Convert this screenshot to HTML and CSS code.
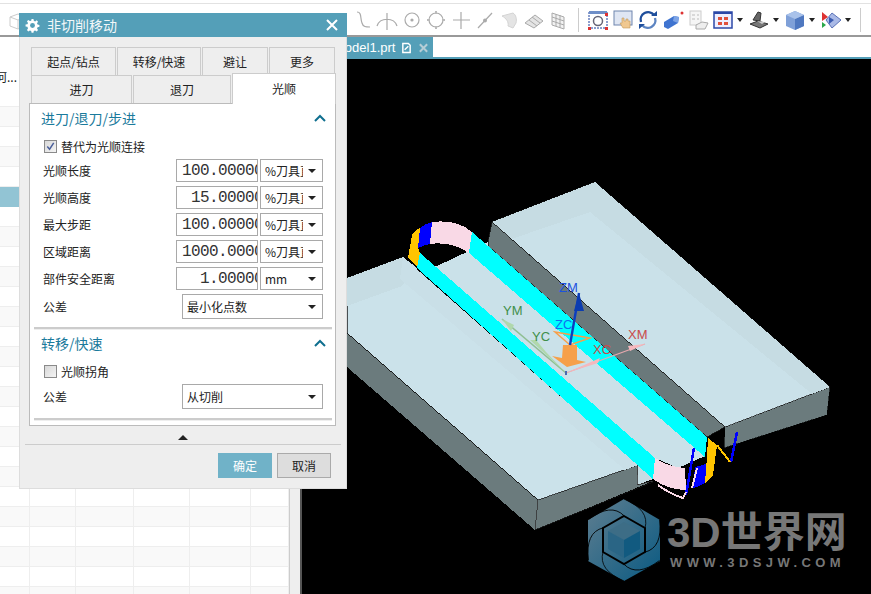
FILE: index.html
```html
<!DOCTYPE html>
<html lang="zh">
<head>
<meta charset="utf-8">
<title>非切削移动</title>
<link rel="stylesheet" href="styles.css">
</head>
<body>
<header class="toolbar">
  <svg class="ic" viewBox="0 0 24 24"><path d="M3 9l8-3 8 3v9l-8 3-8-3zM3 9l8 3 8-3M11 12v9" fill="none" stroke="#ccc"/></svg>
  <div class="tools tools-grey">
    <svg class="ic" viewBox="0 0 24 24"><path d="M6 4c5 0 3 6 5 11 1 4 4 4 8 4" fill="none" stroke="#aaa" stroke-width="1.200"/></svg>
    <svg class="ic" viewBox="0 0 24 24"><path d="M2 18C5 9 19 9 22 18M12 5v17" fill="none" stroke="#aaa" stroke-width="1.200"/></svg>
    <svg class="ic" viewBox="0 0 24 24"><circle cx="12" cy="12" r="7" fill="none" stroke="#aaa" stroke-width="1.200"/><circle cx="12" cy="12" r="1.600" fill="#aaa"/></svg>
    <svg class="ic" viewBox="0 0 24 24"><circle cx="12" cy="12" r="7" fill="none" stroke="#aaa" stroke-width="1.200"/><path d="M12 3v3M12 18v3M3 12h3M18 12h3" stroke="#bbb" stroke-width="2"/></svg>
    <svg class="ic" viewBox="0 0 24 24"><path d="M12 4v17M4 12h17" stroke="#aaa" stroke-width="1.200"/></svg>
    <svg class="ic" viewBox="0 0 24 24"><path d="M5 20L19 5" stroke="#aaa" stroke-width="1.200"/><circle cx="12" cy="12.500" r="2" fill="#aaa"/></svg>
    <svg class="ic" viewBox="0 0 24 24"><path d="M5 8l11-3c3 2 4 6 3 10l-3 5-5-2c1-4-2-8-6-10z" fill="#e4e4e4" stroke="#d4d4d4"/></svg>
    <svg class="ic" viewBox="0 0 24 24"><path d="M3 15l10-8 8 6-9 7z" fill="#e4e4e4" stroke="#aaa"/><path d="M7 12l8 6M10 9l8 6" stroke="#aaa"/></svg>
    <svg class="ic" viewBox="0 0 24 24"><path d="M6 5l12 4v12L6 17zM6 9l12 4M6 13l12 4M10 6v12M14 7v13" fill="#f2f2f2" stroke="#aaa"/></svg>
  </div>
  <span class="tool-sep"></span>
  <div class="tools tools-color">
    <svg class="ic" viewBox="0 0 24 24"><rect x="3" y="4" width="18" height="16" fill="#fff" stroke="#1b3f9e" stroke-dasharray="2 1"/><rect x="3" y="3" width="18" height="3" fill="#6f8fc8"/><circle cx="12" cy="13" r="4.500" fill="none" stroke="#667" stroke-width="1.500"/><rect x="2" y="19" width="3" height="3" fill="#d33"/><rect x="19" y="5" width="3" height="3" fill="#d33"/><rect x="19" y="19" width="3" height="3" fill="#d33"/></svg>
    <svg class="ic" viewBox="0 0 24 24"><rect x="3" y="3" width="18" height="14" fill="#dfe6f3" stroke="#6f85ae"/><path d="M11 10h2v3h2v-2h2v2h2v7h-7l-3-5h2z" fill="#f0c890" stroke="#c29a5c" stroke-width=".6"/></svg>
    <svg class="ic" viewBox="0 0 24 24"><path d="M5 14A7.500 7.500 0 0 1 18 7" fill="none" stroke="#1f4f9c" stroke-width="2.400"/><path d="M19 10A7.500 7.500 0 0 1 6 17" fill="none" stroke="#5d85c2" stroke-width="2.400"/><path d="M15 8h6V3zM9 16H3v5z" fill="#1f4f9c"/></svg>
    <svg class="ic" viewBox="0 0 24 24"><path d="M3 14l10-6 5 1-1 6-10 6-4-2z" fill="#3f74d0"/><path d="M13 8l5 1-1 6-5-2z" fill="#7da4e6"/><circle cx="21" cy="5" r="1.500" fill="#d33"/></svg>
    <svg class="ic" viewBox="0 0 24 24"><rect x="4" y="3" width="11" height="14" fill="#f5f5f5" stroke="#ccc"/><path d="M6 7h3M6 11h3M11 7h2M11 11h2" stroke="#bbb"/><path d="M10 17l6-3 6 1-3 6H10z" fill="#eee" stroke="#aaa"/></svg>
    <span class="tool-menu">
      <svg class="ic" viewBox="0 0 24 24"><rect x="3" y="4" width="18" height="16" fill="#eef" stroke="#2c48a8" stroke-width="1.500"/><path d="M3 5h18" stroke="#2c48a8" stroke-width="2"/><path d="M7 9h4v3H7zM13 9h4v3h-4zM7 14h4v3H7zM13 14h4v3h-4z" fill="#e0503c"/></svg>
      <span class="caret-sm"></span>
    </span>
    <span class="tool-menu">
      <svg class="ic" viewBox="0 0 24 24"><path d="M3 16l8-3 10 3-8 4z" fill="#777" stroke="#333"/><path d="M6 12l5-8 3 1-1 8z" fill="#666" stroke="#333"/><path d="M10 13l8 1-3 2z" fill="#ccc"/></svg>
      <span class="caret-sm"></span>
    </span>
    <span class="tool-menu">
      <svg class="ic" viewBox="0 0 24 24"><path d="M12 3l9 4v11l-9 4-9-4V7z" fill="#7fa0d8"/><path d="M12 11l9-4v11l-9 4z" fill="#4f78c0"/><path d="M12 3l9 4-9 4-9-4z" fill="#a9c2ea"/></svg>
      <span class="caret-sm"></span>
    </span>
    <span class="tool-menu">
      <svg class="ic" viewBox="0 0 24 24"><path d="M13 5l9 7-9 8-6-8z" fill="#a9b9e6" stroke="#5a72b8"/><path d="M10 9l5 3-5 4z" fill="#3b5bb0"/><path d="M3 4l6 5-6 4z" fill="#d33"/><path d="M3 14l4 3-4 3z" fill="#2aa84a"/></svg>
      <span class="caret-sm"></span>
    </span>
  </div>
  <span class="tool-sep tool-sep-end"></span>
</header>

<main class="workspace">
  <section class="navigator">
    <div class="nav-head">何...</div>
    <div class="nav-rows">
      <div class="row-line"></div>
      <div class="row-line"></div>
      <div class="row-line"></div>
      <div class="row-line"></div>
      <div class="row-line"></div>
      <div class="row-line row-sel"></div>
      <div class="row-line"></div>
      <div class="row-line"></div>
      <div class="row-line"></div>
      <div class="row-line"></div>
      <div class="row-line"></div>
      <div class="row-line"></div>
      <div class="row-line"></div>
      <div class="row-line"></div>
      <div class="row-line"></div>
      <div class="row-line"></div>
      <div class="row-line"></div>
      <div class="row-line"></div>
      <div class="row-line"></div>
      <div class="row-line"></div>
      <div class="row-line cols"><i></i><i></i><i></i><i></i><i></i><i></i></div>
      <div class="row-line cols"><i></i><i></i><i></i><i></i><i></i><i></i></div>
      <div class="row-line cols"><i></i><i></i><i></i><i></i><i></i><i></i></div>
      <div class="row-line cols"><i></i><i></i><i></i><i></i><i></i><i></i></div>
      <div class="row-line cols"><i></i><i></i><i></i><i></i><i></i><i></i></div>
      <div class="row-line cols"><i></i><i></i><i></i><i></i><i></i><i></i></div>
    </div>
  </section>
  <section class="viewer">
    <div class="doc-tabs">
      <div class="doc-tab">
        <span class="doc-name">model1.prt</span>
        <svg class="doc-ic" viewBox="0 0 12 12"><path d="M2 1h6l2 2v8H2zM4 8l4-4" fill="none" stroke="#fff" stroke-width="1.600"/></svg>
        <svg class="doc-ic" viewBox="0 0 12 12"><path d="M2 2l8 8M10 2l-8 8" stroke="#b5cdd6" stroke-width="2.200"/></svg>
      </div>
    </div>
    <div class="canvas">
      <svg class="scene" viewBox="302 59 569 535">
        <g shape-rendering="crispEdges">
          <!-- right block -->
          <polygon points="725,427 830,387 827,415 724,448" fill="#6b7b7d" stroke="#000" stroke-width=".6"/>
          <polygon points="492,222 595,182 830,387 725,427" fill="#cae1e9" stroke="#222" stroke-width=".6"/>
          <polygon points="492,222 595,182 830,387 812,394 590,212 500,243" fill="#c6dce3"/>
          <polygon points="492,222 725,427 707,437 488,246 488,242" fill="#6a797b" stroke="#111" stroke-width=".8"/>
          <!-- groove floor -->
          <polygon points="437,266 488,242 488,246 707,437 705,456 678,468 655,458 420,268" fill="#cae1e9"/>
          <polygon points="472,232 707,437 705,457 469,253" fill="#00ffff"/>
          <!-- left block -->
          <polygon points="347,367 347,333 538,500 638,465 637,485 653,481 535,530" fill="#6b7b7d"/>
          <polygon points="347,278 403,257 638,465 538,500 347,333" fill="#cbe2ea" stroke="#111" stroke-width=".7"/>
          <polygon points="347,278 403,257 417,268 402,286 347,306" fill="#c6dce3"/>
          <polygon points="403,257 638,465 625,470 400,279" fill="#c9dfe7"/>
          <polygon points="638,465 653,479 637,485" fill="#c6dce3"/>
          <path d="M538,500L535,530M638,465L637,485L653,481" fill="none" stroke="#333" stroke-width=".8"/>
          <path d="M347,333L538,500M535,530L653,482" fill="none" stroke="#111" stroke-width=".8"/>
          <polygon points="420,253 655,458 653,479 417,268" fill="#00ffff"/>
          <!-- far arc -->
          <path d="M432,222Q457,219 472,232L469,253Q452,241 430,244z" fill="#f9d9e6"/>
          <path d="M420,228Q425,224 432,222L430,244Q424,245 418,248z" fill="#0000ff"/>
          <path d="M412,235Q415,230 420,228L418,248L420,253L417,267L408,258z" fill="#ffc400"/>
          <!-- near arc -->
          <path d="M655,458Q668,467 685,468L686,490Q668,490 653,479z" fill="#f9d9e6"/>
          <path d="M695,467Q702,466 707,463L705,483Q699,487 693,488z" fill="#0000ff"/>
          <path d="M708,438L717,445L713,475L705,483L707,457z" fill="#ffc400"/>
          <path d="M694,448L686,495M737,432L731,462" stroke="#0000ff" stroke-width="2.500" fill="none"/>
          <path d="M717,445L730,462" stroke="#ffc400" stroke-width="2" fill="none"/>
          <path d="M658,485Q670,494 683,498L686,492" stroke="#f9d9e6" stroke-width="2" fill="none"/>
          <path d="M697,468L692,488" stroke="#f9d9e6" stroke-width="2" fill="none"/>
        </g>
        <!-- tool -->
        <path d="M555,332L590,338 570,345z" fill="none" stroke="#f6a04a" stroke-width="1.500"/>
        <polygon points="563,345 577,345 577,360 586,362 567,367 552,356 562,358" fill="#f6a04a"/>
        <!-- triad -->
        <path d="M566,373L502,319" stroke="#8fbf92" stroke-width="1.500"/>
        <path d="M502,319L514,325 511,331z" fill="#b0d8ac"/>
        <path d="M566,373L530,340 536,340 546,352z" fill="#b0d8ac"/>
        <path d="M566,373L645,344" stroke="#e8a8ae" stroke-width="1.200"/>
        <path d="M566,373L600,358 598,363z M645,344L628,346 630,351z" fill="#f5b8bd"/>
        <path d="M579,293L570,345" stroke="#0b3cc0" stroke-width="2.400"/>
        <path d="M579,293L584,311 574,311z" fill="#0b3cb0"/>
        <rect x="565" y="371" width="2" height="4" fill="#4a68b0"/>
        <g class="axis">
          <text class="ax-blue" x="559" y="292">ZM</text>
          <text class="ax-cyan" x="555" y="329">ZC</text>
          <text class="ax-green" x="503" y="315">YM</text>
          <text class="ax-green" x="532" y="341">YC</text>
          <text class="ax-red" x="593" y="354">XC</text>
          <text class="ax-red" x="628" y="339">XM</text>
        </g>
        <!-- watermark logo -->
        <defs>
          <linearGradient id="logo" x1="0" y1="0" x2="1" y2="1">
            <stop offset="0" stop-color="#5f7e90"/>
            <stop offset="1" stop-color="#0a5a82"/>
          </linearGradient>
        </defs>
        <polygon points="624,499 660,520 660,561 624,581 588,561 588,520" fill="url(#logo)"/>
        <g fill="none" stroke="#000" stroke-width=".8">
          <path d="M624,499Q650,510 645,528"/>
          <path d="M624,499Q650,510 645,528" transform="rotate(60 624 540)"/>
          <path d="M624,499Q650,510 645,528" transform="rotate(120 624 540)"/>
          <path d="M624,499Q650,510 645,528" transform="rotate(180 624 540)"/>
          <path d="M624,499Q650,510 645,528" transform="rotate(240 624 540)"/>
          <path d="M624,499Q650,510 645,528" transform="rotate(300 624 540)"/>
        </g>
        <polygon points="624,516 645,528 645,552 624,564 603,552 603,528" fill="none" stroke="#000" stroke-width="2"/>
        <polygon points="624,522 640,531 624,540 608,531" fill="#3d6d86"/>
        <polygon points="608,531 624,540 624,558 608,549" fill="#2a6585"/>
        <polygon points="640,531 640,549 624,558 624,540" fill="#115a80"/>
        <text class="wm-big" x="667" y="547">3D世界网</text>
        <text class="wm-small" x="670" y="567">WWW.3DSJW.COM</text>
      </svg>
    </div>
  </section>
</main>

<aside class="dialog">
  <div class="dlg-title">
    <svg class="gear" viewBox="0 0 16 16"><path d="M7 1h2l.4 2 1.400.6 1.700-1.100 1.400 1.400-1.100 1.700.6 1.400 2 .4v2l-2 .4-.6 1.400 1.100 1.700-1.400 1.400-1.700-1.100-1.400.6-.4 2H7l-.4-2-1.400-.6-1.700 1.100-1.400-1.400 1.100-1.700L2.600 9.400l-2-.4V7l2-.4.6-1.400-1.100-1.700 1.400-1.400 1.700 1.100L6.600 3z" fill="#fff"/><circle cx="8" cy="8" r="2.600" fill="#549fb8"/></svg>
    <span class="dlg-name">非切削移动</span>
    <svg class="close" viewBox="0 0 12 12"><path d="M1 1l10 10M11 1L1 11" stroke="#fff" stroke-width="2"/></svg>
  </div>
  <div class="tabs tabs-top">
    <div class="tab t1">起点/钻点</div>
    <div class="tab t2">转移/快速</div>
    <div class="tab t3">避让</div>
    <div class="tab t3">更多</div>
  </div>
  <div class="tabs tabs-low">
    <div class="tab t4">进刀</div>
    <div class="tab t5">退刀</div>
    <div class="tab active">光顺</div>
  </div>
  <div class="panel">
    <div class="sec-head"><span>进刀/退刀/步进</span><svg class="chev" viewBox="0 0 12 8"><path d="M1 7l5-5 5 5" fill="none" stroke="#0f6f8f" stroke-width="2"/></svg></div>
    <label class="check-row"><span class="box"><svg viewBox="0 0 12 12"><path d="M2.500 6l2.500 3 4.500-7" fill="none" stroke="#4a5f9a" stroke-width="1.600"/></svg></span>替代为光顺连接</label>
    <div class="fields">
      <div class="row"><span>光顺长度</span><div class="num"><b>100.00000</b></div><div class="sel"><em>%刀具直径</em></div></div>
      <div class="row"><span>光顺高度</span><div class="num"><b>15.00000</b></div><div class="sel"><em>%刀具直径</em></div></div>
      <div class="row"><span>最大步距</span><div class="num"><b>100.00000</b></div><div class="sel"><em>%刀具直径</em></div></div>
      <div class="row"><span>区域距离</span><div class="num"><b>1000.0000</b></div><div class="sel"><em>%刀具直径</em></div></div>
      <div class="row"><span>部件安全距离</span><div class="num"><b>1.00000</b></div><div class="sel"><em>mm</em></div></div>
      <div class="row row-wide"><span>公差</span><div class="sel"><em>最小化点数</em></div></div>
    </div>
    <div class="sep"></div>
    <div class="sec-head"><span>转移/快速</span><svg class="chev" viewBox="0 0 12 8"><path d="M1 7l5-5 5 5" fill="none" stroke="#0f6f8f" stroke-width="2"/></svg></div>
    <label class="check-row"><span class="box"></span>光顺拐角</label>
    <div class="fields">
      <div class="row row-wide"><span>公差</span><div class="sel"><em>从切削</em></div></div>
    </div>
    <div class="sep sep-end"></div>
  </div>
  <div class="collapse"><span class="tri"></span></div>
  <div class="actions">
    <button class="btn btn-ok">确定</button>
    <button class="btn">取消</button>
  </div>
</aside>
</body>
</html>
```

FILE: styles.css
```css
* { box-sizing: border-box; }
html, body { margin: 0; height: 100%; }
body {
  position: relative;
  width: 871px;
  height: 594px;
  overflow: hidden;
  background: #fff;
  font-family: "Noto Sans CJK SC", "Liberation Sans", sans-serif;
  font-size: 12px;
  color: #222;
  display: flex;
  flex-direction: column;
}

/* toolbar */
.toolbar {
  height: 37px;
  flex: none;
  display: flex;
  align-items: center;
  border-top: 3px solid #fff;
  border-bottom: 2px solid #999;
  box-shadow: inset 0 1px 0 #e2e2e2;
  padding: 2px 0 0 7px;
}
.ic { width: 24px; height: 24px; flex: none; }
.tools { display: flex; align-items: center; }
.tools-grey { margin-left: 320px; gap: .4px; }
.tools-color { gap: 1px; }
.tool-sep { width: 1px; height: 24px; background: #ccc; margin: 0 7px 0 8px; flex: none; }
.tool-sep-end { margin: 0 0 0 6px; }
.tool-menu { display: flex; align-items: center; gap: 1px; margin-right: 1px; }
.caret-sm {
  width: 0; height: 0; margin: 0 2px 0 1px;
  border-left: 3px solid transparent; border-right: 3px solid transparent;
  border-top: 4px solid #222;
}

/* workspace */
.workspace { flex: 1; display: flex; min-height: 0; }
.navigator {
  width: 300px;
  flex: none;
  border-right: 10px solid #eee;
  background: #fff;
  box-shadow: inset -1px 0 0 #ccc;
  overflow: hidden;
}
.nav-head {
  margin-top: 30px;
  height: 20px;
  line-height: 20px;
  font-size: 12px;
  margin-left: -5px;
  white-space: nowrap;
}
.nav-rows { width: 289px; }
.row-line { height: 20px; border-bottom: 1px solid #eee; }
.row-line:nth-child(even) { background: #f9f9f9; }
.row-line.row-sel { background: #92c4d4; border-bottom-color: #92c4d4; }
.cols { display: grid; grid-template-columns: 30px 46px 58px 56px 61px 38px; }
.cols i { border-right: 1px solid #eee; }

.viewer {
  flex: 1;
  display: flex;
  flex-direction: column;
  border-left: 2px solid #555;
  min-width: 0;
}
.doc-tabs { height: 22px; flex: none; background: #fff; border-bottom: 2px solid #549fb8; }
.doc-tab {
  width: 131px;
  height: 21px;
  background: #549fb8;
  color: #fff;
  display: flex;
  align-items: center;
  padding-left: 32px;
  gap: 6px;
}
.doc-name { font: 13px "Liberation Sans", sans-serif; }
.doc-ic { width: 11px; height: 12px; flex: none; }
.canvas { flex: 1; background: #000; min-height: 0; }
.scene { display: block; width: 569px; height: 535px; }
.axis text { font: 13px "Liberation Sans", sans-serif; }
.ax-blue { fill: #1c52e0; }
.ax-cyan { fill: #1070f0; }
.ax-green { fill: #3f8f4a; }
.ax-red { fill: #c94a4a; }
.wm-big {
  font: bold 42px "Liberation Sans", "Noto Sans CJK SC", sans-serif;
  fill: #777;
}
.wm-small {
  font: bold 13px "Liberation Sans", sans-serif;
  letter-spacing: 4.4px;
  fill: #777;
}

/* dialog */
.dialog {
  position: absolute;
  left: 19px;
  top: 13px;
  width: 328px;
  height: 476px;
  background: #eee;
  border: 1px solid #ddd;
  border-top: 0;
  display: flex;
  flex-direction: column;
}
.dlg-title {
  height: 24px;
  flex: none;
  background: #549fb8;
  color: #fff;
  margin: 0 -1px;
  display: flex;
  align-items: center;
  padding: 0 9px 0 6px;
}
.gear { width: 15px; height: 15px; flex: none; }
.dlg-name { font-size: 14px; margin-left: 7px; flex: 1; color: #f2f7f9; }
.close { width: 12px; height: 12px; flex: none; }
.tabs { display: flex; gap: 1px; margin-left: 11px; flex: none; }
.tabs-top { margin-top: 10px; }
.tab {
  height: 28px;
  background: #eee;
  border: 1px solid #ccc;
  border-bottom: 0;
  display: flex;
  align-items: center;
  justify-content: center;
}
.t1 { width: 85px; }
.t2 { width: 84px; }
.t3 { width: 66px; }
.t4 { width: 101px; padding-bottom: 1px; }
.t5 { width: 98px; padding-bottom: 1px; }
.tab.active {
  width: 104px;
  height: 31px;
  margin: -2px 0 -1px;
  background: #fff;
  position: relative;
  z-index: 1;
  padding-bottom: 2px;
}
.panel {
  margin-left: 9px;
  width: 307px;
  height: 323px;
  flex: none;
  background: #fff;
  border: 1px solid #bbb;
}
.sec-head {
  height: 30px;
  display: flex;
  align-items: center;
  justify-content: space-between;
  padding: 0 9px 2px 11px;
  font-size: 14px;
  color: #1a7a9c;
}
.chev { width: 12px; height: 8px; flex: none; margin-top: -1px; }
.check-row {
  height: 24px;
  display: flex;
  align-items: center;
  padding-left: 14px;
  gap: 4px;
}
.box {
  width: 13px; height: 13px;
  border: 1px solid #8a8a8a;
  background: linear-gradient(135deg, #d8d8d8, #f4f4f4);
  flex: none;
  display: flex;
}
.box svg { width: 11px; height: 11px; }
.fields { display: flex; flex-direction: column; gap: 4px; margin-top: 1px; }
.row {
  display: grid;
  grid-template-columns: 131px 82px 63px;
  column-gap: 2px;
  padding-left: 13px;
  align-items: center;
  height: 23px;
}
.row-wide { grid-template-columns: 137px 141px; height: 25px; }
.num {
  height: 23px;
  border: 1px solid #a9a9a9;
  background: #fff;
  overflow: hidden;
  display: flex;
  align-items: center;
  padding: 0 3px;
}
.num b {
  font: 16px "Liberation Mono", monospace;
  letter-spacing: -.6px;
  width: 83px;
  flex: none;
  text-align: right;
  color: #333;
  white-space: nowrap;
}
.sel {
  height: 100%;
  border: 1px solid #a9a9a9;
  background: #fff;
  position: relative;
  display: flex;
  align-items: center;
  padding-left: 4px;
  overflow: hidden;
}
.sel em {
  font-style: normal;
  width: 38px;
  overflow: hidden;
  white-space: nowrap;
  flex: none;
}
.row-wide .sel em { width: auto; }
.sel::after {
  content: "";
  position: absolute;
  right: 6px;
  top: 50%;
  margin-top: -2px;
  border-left: 4px solid transparent;
  border-right: 4px solid transparent;
  border-top: 4px solid #222;
}
.sep {
  width: 298px;
  height: 2px;
  margin: 8px 0 0 4px;
  background: #ccc;
  box-shadow: 0 1px 0 #eee;
}
.sep-end { margin-top: 9px; }
.collapse {
  height: 18px;
  flex: none;
  display: flex;
  align-items: center;
  justify-content: center;
}
.tri {
  width: 0; height: 0;
  margin-top: 4px;
  border-left: 5px solid transparent;
  border-right: 5px solid transparent;
  border-bottom: 5px solid #222;
}
.actions {
  margin: 0 5px;
  border-top: 1px solid #ccc;
  padding: 8px 10px 0 0;
  display: flex;
  justify-content: flex-end;
  gap: 5px;
}
.btn {
  width: 54px;
  height: 25px;
  font: 12px "Noto Sans CJK SC", sans-serif;
  color: #222;
  background: #ddd;
  border: 1px solid #aaa;
  padding: 0;
}
.btn-ok { background: #70b2c8; border-color: #70b2c8; color: #fff; }
```
